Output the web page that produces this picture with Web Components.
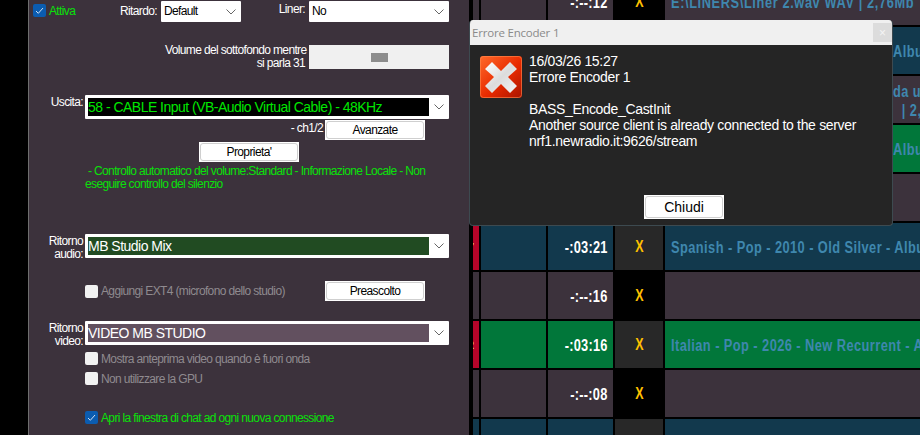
<!DOCTYPE html>
<html><head><meta charset="utf-8"><style>
html,body{margin:0;padding:0;width:920px;height:435px;overflow:hidden;background:#000;font-family:"Liberation Sans",Arial,sans-serif}
</style></head><body>
<studio-app>
  <config-panel slot="left">
    <panel-row style="--mt:0px;--h:21px;--pl:4px">
      <check-box checked tone="on" style="width:87px;margin-top:-2px">Attiva</check-box>
      <field-label style="width:41px;margin-top:-1px">Ritardo:</field-label>
      <combo-box value="Default" style="width:80px" plain></combo-box>
      <field-label style="width:64px;text-align:right;padding-right:4px;align-self:flex-start;margin-top:1px">Liner:</field-label>
      <combo-box value="No" style="width:140px" plain></combo-box>
    </panel-row>
    <panel-row style="--mt:23px;--h:24px;--pl:136px">
      <field-label style="width:140px;text-align:right;line-height:13px">Volume del sottofondo mentre<br>si parla 31</field-label>
      <volume-slider style="margin-left:4px"></volume-slider>
    </panel-row>
    <panel-row style="--mt:26px;--h:24px;--pl:0px">
      <field-label style="width:54px;text-align:right;align-self:flex-start">Uscita:</field-label>
      <combo-box value="58 - CABLE Input (VB-Audio Virtual Cable) - 48KHz" style="width:364px;margin-left:2px;--fill:#000;--ink:#00e600"></combo-box>
    </panel-row>
    <panel-row style="--mt:1px;--h:20px;--pl:240px">
      <field-label style="width:54px;text-align:right;align-self:flex-start;margin-top:1px">- ch1/2</field-label>
      <win-button style="width:100px;height:20px;margin-left:2px">Avanzate</win-button>
    </panel-row>
    <panel-row style="--mt:2px;--h:20px;--pl:170px">
      <win-button style="width:100px;height:20px">Proprieta'</win-button>
    </panel-row>
    <panel-row style="--mt:3px;--h:26px;--pl:56px">
      <field-label style="color:#0ae00a;line-height:13px"><span style="margin-left:3px">- Controllo automatico del volume:Standard - Informazione Locale - Non</span><br>eseguire controllo del silenzio</field-label>
    </panel-row>
    <panel-row style="--mt:43px;--h:24px;--pl:0px">
      <field-label style="width:54px;text-align:right;line-height:13px;align-self:flex-start;margin-top:1px">Ritorno<br>audio:</field-label>
      <combo-box value="MB Studio Mix" style="width:364px;margin-left:2px;--fill:#214b22;--ink:#fff"></combo-box>
    </panel-row>
    <panel-row style="--mt:23px;--h:20px;--pl:56px">
      <check-box tone="off" style="width:240px">Aggiungi EXT4 (microfono dello studio)</check-box>
      <win-button style="width:100px;height:20px">Preascolto</win-button>
    </panel-row>
    <panel-row style="--mt:20px;--h:24px;--pl:0px">
      <field-label style="width:54px;text-align:right;line-height:13px;align-self:flex-start;margin-top:1px">Ritorno<br>video:</field-label>
      <combo-box value="VIDEO MB STUDIO" style="width:364px;margin-left:2px;--fill:#62505f;--ink:#fff"></combo-box>
    </panel-row>
    <panel-row style="--mt:7px;--h:13px;--pl:56px"><check-box tone="off">Mostra anteprima video quando è fuori onda</check-box></panel-row>
    <panel-row style="--mt:7px;--h:13px;--pl:56px"><check-box tone="off">Non utilizzare la GPU</check-box></panel-row>
    <panel-row style="--mt:26px;--h:13px;--pl:56px"><check-box checked tone="on">Apri la finestra di chat ad ogni nuova connessione</check-box></panel-row>
  </config-panel>
  <play-list slot="right">
    <play-row kind="plain" time="-:--:12" x="X"><span style="letter-spacing:.76px">E:\LINERS\Liner 2.wav WAV | 2,76Mb</span></play-row>
    <play-row kind="blue" offset="222">Albu</play-row>
    <play-row kind="plain" offset="222"><span style="display:block;line-height:19px">da un<br><span style="margin-left:11px">| 2,</span></span></play-row>
    <play-row kind="green" offset="222">Albu</play-row>
    <play-row kind="plain"></play-row>
    <play-row kind="blue" time="-:03:21" x="X" mark="7">Spanish - Pop - 2010 - Old Silver - Albu</play-row>
    <play-row kind="plain" time="-:--:16" x="X"></play-row>
    <play-row kind="green" time="-:03:16" x="X" mark="2">Italian - Pop - 2026 - New Recurrent - A</play-row>
    <play-row kind="plain" time="-:--:08" x="X"></play-row>
    <play-row kind="blue"></play-row>
  </play-list>
  <error-dialog slot="overlay" heading="Errore Encoder 1">16/03/26 15:27<br>Errore Encoder 1<br><br>BASS_Encode_CastInit<br>Another source client is already connected to the server<br>nrf1.newradio.it:9626/stream</error-dialog>
</studio-app>
<script>
function def(name, css, html, init){
  customElements.define(name, class extends HTMLElement{
    constructor(){super();this.attachShadow({mode:'open'}).innerHTML='<style>'+css+'</style>'+(html||'<slot></slot>');}
    connectedCallback(){ if(init) init.call(this,this.shadowRoot); }
  });
}
def('studio-app',
 ':host{display:block;position:relative;width:920px;height:435px;overflow:hidden;background:#000}'+
 '.wrap{display:flex;height:435px}.rail{width:28px;background:#000}.line{width:1px;background:#6e6e6e}',
 '<div class="wrap"><div class="rail"></div><div class="line"></div><slot name="left"></slot><slot name="right"></slot></div><slot name="overlay"></slot>');
def('config-panel',
 ':host{display:flex;flex-direction:column;width:440px;height:435px;padding-top:1px;box-sizing:border-box;background:#3c323c;color:#fff;font:12px/14px "Liberation Sans",Arial,sans-serif;flex:none}');
def('panel-row',
 ':host{display:flex;align-items:center;box-sizing:border-box;margin-top:var(--mt);height:var(--h);padding-left:var(--pl);flex:none}');
def('field-label',':host{display:block;white-space:nowrap;letter-spacing:-.64px;flex:none}');
def('check-box',
 ':host{display:flex;align-items:center;gap:3px;white-space:nowrap;letter-spacing:-.64px;color:#8f8a8f;flex:none}:host([tone=on]){color:#0ae00a}'+
 '.b{width:13px;height:13px;border-radius:2px;background:#f2f2f2;display:flex;flex:none;align-items:center;justify-content:center}:host([checked]) .b{background:#0b5cb0}'+
 'svg{width:9px;height:9px;display:none}:host([checked]) svg{display:block}',
 '<span class="b"><svg viewBox="0 0 9 9"><path d="M1 5l2.3 2.3L8 2" fill="none" stroke="#cfe0f2" stroke-width="1"/></svg></span><slot></slot>');
def('combo-box',
 ':host{display:block;box-sizing:border-box;height:24px;background:#fff;border-radius:1px;position:relative;flex:none;--fill:#fff;--ink:#000}'+
 ':host([plain]){height:21px}'+
 '.f{position:absolute;left:3px;top:3px;bottom:3px;right:20px;background:var(--fill);color:var(--ink);font-size:14px;line-height:18px;white-space:nowrap;overflow:hidden;letter-spacing:-.52px}'+
 ':host([plain]) .f{left:3px;right:18px;font-size:12px;line-height:15px;letter-spacing:-.64px}'+
 'svg{position:absolute;right:5px;top:50%;margin-top:-3px;width:10px;height:6px}',
 '<span class="f"></span><svg viewBox="0 0 10 6"><path d="M.5 .5L5 5 9.5 .5" fill="none" stroke="#666" stroke-width="1"/></svg>',
 function(r){r.querySelector('.f').textContent=this.getAttribute('value');});
def('volume-slider',
 ':host{display:flex;width:140px;height:24px;background:#f0f0f0;align-items:center;justify-content:center;flex:none}i{display:block;width:17px;height:9px;background:#8c8c8c}',
 '<i></i>');
def('win-button',
 ':host{display:block;box-sizing:border-box;background:#fff;padding:1px;flex:none;color:#000;font:12px "Liberation Sans",Arial,sans-serif;letter-spacing:-.6px}'+
 'div{height:100%;box-sizing:border-box;border:1px solid #cfcfcf;border-radius:3px;display:flex;align-items:center;justify-content:center;background:#fff}',
 '<div><slot></slot></div>');
def('play-list',
 ':host{display:flex;flex-direction:column;gap:2px;flex:1;margin-top:-22px;height:457px;min-width:0;padding-left:4px;background:#000}');
def('play-row',
 ':host{display:grid;grid-template-columns:6px 65px 65px 48px 255px;column-gap:2px;height:47px;flex:none;--bg:#3c323c;--x:#000;font:bold 16px "Liberation Sans",sans-serif}'+
 ':host([kind=blue]){--bg:#12394d;--x:#282828}:host([kind=green]){--bg:#01773a;--x:#282828}'+
 'div{background:var(--bg);display:flex;align-items:center;overflow:hidden;min-width:0}'+
 ':host([mark]) .m{background:#b5052a;color:#f2c0a0;font-size:11px}.m b{margin-left:-5px}'+
 '.t{justify-content:flex-end;padding:2px 5px 0 0;color:#fff;box-sizing:border-box}.t b{display:inline-block;letter-spacing:.3px;transform:scaleX(.8);transform-origin:100% 50%}'+
 '.x{background:var(--x);justify-content:center;color:#ffc000;padding-top:1px}.x b{display:inline-block;transform:scaleX(.78)}'+
 '.s{color:#3f87ae;white-space:nowrap;box-sizing:border-box;padding-top:2px}.s>b{display:inline-block;letter-spacing:.56px;transform:scaleX(.8);transform-origin:0 50%;flex:none}',
 '<div class="m"><b></b></div><div></div><div class="t"><b></b></div><div class="x"><b></b></div><div class="s"><b><slot></slot></b></div>',
 function(r){r.querySelector('.t b').textContent=this.getAttribute('time')||'';
   r.querySelector('.x b').textContent=this.getAttribute('x')||'';
   r.querySelector('.m b').textContent=this.getAttribute('mark')||'';
   r.querySelector('.s').style.paddingLeft=(6+ +(this.getAttribute('offset')||0))+'px';});
def('error-dialog',
 ':host{position:absolute;left:469px;top:20px;width:424px;height:206px;box-sizing:border-box;border:1px solid #3d4a50;border-top:0;border-radius:4px;background:#252525;display:flex;flex-direction:column;overflow:hidden;font:14px/16px "Liberation Sans",Arial,sans-serif;color:#fff}'+
 '.tb{height:25px;background:#f0f0f0;display:flex;align-items:center;justify-content:space-between;padding:0 0 0 2px;flex:none;color:#8a8a8a;font:11.5px "Open Sans",sans-serif;letter-spacing:-.2px}'+
 '.c{width:19px;height:19px;background:#dcdcdc;color:#f4f4f4;display:flex;align-items:center;justify-content:center;font:12px "Liberation Sans",sans-serif}'+
 '.b{display:flex;gap:7px;padding:11px 0 0 10px;flex:1;min-height:0}.b svg{width:42px;height:42px;flex:none}.t{margin-top:-3px;letter-spacing:-.33px;white-space:nowrap}'+
 '.a{display:flex;justify-content:center;padding:0 0 6px 6px}win-button{width:80px;height:24px;font-size:14px;letter-spacing:0}',
 '<div class="tb"><span class="h"></span><span class="c">×</span></div><div class="b">'+
 '<svg viewBox="0 0 42 42"><defs><linearGradient id="g" x1="0" y1="0" x2="1" y2="1"><stop offset="0" stop-color="#ff6a2a"/><stop offset=".55" stop-color="#e82a00"/><stop offset="1" stop-color="#a81400"/></linearGradient><linearGradient id="w" x1="0" y1="0" x2="1" y2="1"><stop offset="0" stop-color="#fff"/><stop offset=".5" stop-color="#dcdcdc"/><stop offset="1" stop-color="#f4f4f4"/></linearGradient></defs><rect width="42" height="42" rx="3" fill="url(#g)"/><rect x=".5" y=".5" width="41" height="41" rx="3" fill="none" stroke="#ff8a50" stroke-opacity=".6"/><path d="M12 6l9 9 9-9 7 7-9 8 9 9-7 7-9-9-9 9-7-7 9-9-9-8z" fill="url(#w)"/></svg>'+
 '<div class="t"><slot></slot></div></div><div class="a"><win-button>Chiudi</win-button></div>',
 function(r){r.querySelector('.h').textContent=this.getAttribute('heading');});
</script>
</body></html>
